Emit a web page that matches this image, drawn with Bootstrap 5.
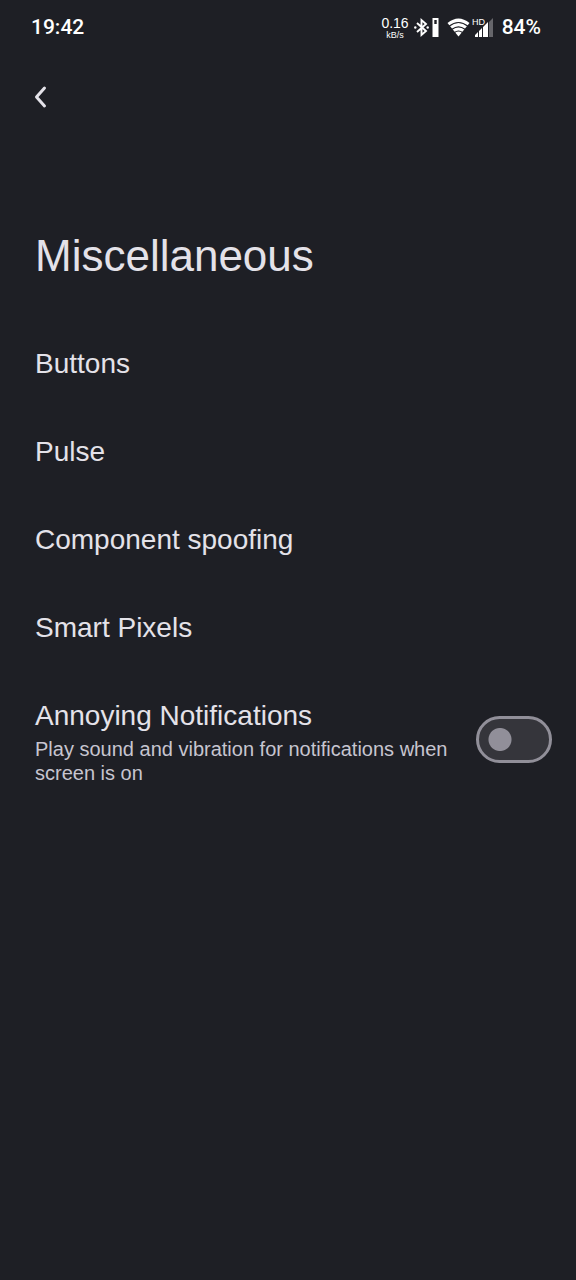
<!DOCTYPE html>
<html lang="en" data-bs-theme="dark">
<head>
<meta charset="utf-8">
<meta name="viewport" content="width=device-width, initial-scale=1">
<title>Miscellaneous</title>
<link href="https://cdn.jsdelivr.net/npm/bootstrap@5.3.0/dist/css/bootstrap.min.css" rel="stylesheet">
<style>
body{background:#1e1f25;color:#e4e2e9;font-family:"Liberation Sans",Arial,sans-serif}
.statusbar{height:56px;padding:0 35px 0 31px;color:#fff;font-family:Roboto,sans-serif;font-size:21px;font-weight:500}
.net-rate{font:14px/13px "Liberation Sans",sans-serif;margin-right:4px}
.net-unit{font-size:9px;line-height:10px}
.signal-icons{margin-right:7px}
.back-btn{width:32px;height:32px;margin:25px 0 0 24px;color:inherit}
.page-title{font-size:44px;line-height:56px;margin:115px 0 0;padding:0 35px;font-weight:400;color:#e4e2e9}
.options{margin-top:36px}
.option{display:flex;align-items:center;min-height:88px;padding:0 35px;font-size:28px;line-height:34px;color:#e4e2e9;text-decoration:none}
.option-toggle{align-items:flex-start;padding:27px 24px 28px 35px}
.summary{font-size:20px;line-height:24px;margin-top:4px;color:#c7c5d0}
.form-check-input.toggle{width:76px;height:47px;border:3px solid #918f99;border-radius:24px;background-color:#35353b;
 background-image:radial-gradient(circle at 21px 50%,#918f99 11px,transparent 12px);background-size:100% 100%;background-position:0 0;margin:17px 0 0}
.form-check-input.toggle:checked{background-image:radial-gradient(circle at 49px 50%,#e4e2e9 11px,transparent 12px)}
</style>
</head>
<body>
<header class="statusbar d-flex align-items-center justify-content-between">
  <span>19:42</span>
  <div class="d-flex align-items-center">
    <span class="net-rate d-flex flex-column align-items-center"><span>0.16</span><span class="net-unit">kB/s</span></span>
    <svg class="signal-icons" width="82" height="22" viewBox="0 0 82 22" fill="#fff" aria-hidden="true">
      <path d="M4 6l9 8L8.500 18V3L13 7 4 15" fill="none" stroke="#fff" stroke-width="1.900"/>
      <circle cx="2.300" cy="10.500" r="1.200"/><circle cx="14.700" cy="10.500" r="1.200"/>
      <path fill-rule="evenodd" d="M19.500 1h6v19h-6zM21.300 3v4h2.400V3z"/>
      <path d="M34.500 6Q45.500-3 56.500 6L45.500 19.500z"/>
      <path d="M36 9.300Q45.500 1.800 55 9.300M39 12.300Q45.500 7.500 52 12.300M41.500 15.500Q45.500 12.500 49.500 15.500" fill="none" stroke="#1e1f25" stroke-width="1.100"/>
      <text x="59" y="8" font-family="Liberation Sans, sans-serif" font-size="9" font-weight="400">HD</text>
      <path d="M62 20v-2l3-3v5zM66 20v-6l3-3v9zM70 20V10l5-5v15z"/>
      <path d="M76 20V5l4-4v19z" fill="#66666b"/>
    </svg>
    <span>84%</span>
  </div>
</header>
<button type="button" class="btn border-0 p-0 back-btn d-block" aria-label="Back">
  <svg class="d-block" width="32" height="32" viewBox="0 0 32 32" fill="none" stroke="currentColor" stroke-width="3" stroke-linecap="round" stroke-linejoin="round"><path d="M20.500 7L12.500 16l8 9"/></svg>
</button>
<h1 class="page-title">Miscellaneous</h1>
<main class="options">
  <a class="option" href="#">Buttons</a>
  <a class="option" href="#">Pulse</a>
  <a class="option" href="#">Component spoofing</a>
  <a class="option" href="#">Smart Pixels</a>
  <div class="option option-toggle gap-4">
    <label class="flex-grow-1" for="annoying"><span class="d-block">Annoying Notifications</span><span class="summary d-block">Play sound and vibration for notifications when screen is on</span></label>
    <input class="form-check-input toggle flex-shrink-0" type="checkbox" role="switch" id="annoying">
  </div>
</main>
<script src="https://cdn.jsdelivr.net/npm/bootstrap@5.3.0/dist/js/bootstrap.bundle.min.js"></script>
</body>
</html>
